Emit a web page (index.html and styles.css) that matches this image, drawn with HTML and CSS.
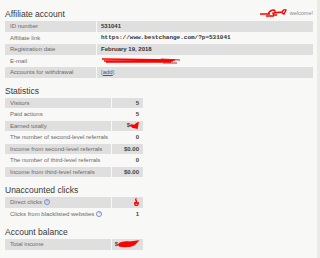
FILE: index.html
```html
<!DOCTYPE html>
<html lang="en">
<head>
    <meta charset="UTF-8">
    <meta name="viewport" content="width=device-width, initial-scale=1.0">
    <title>Affiliate account</title>
    <link rel="stylesheet" href="styles.css">
</head>
<body>
    <div class="page">
        <div class="title-row">
            <h2>Affiliate account</h2>
            <div class="welcome">
                <svg class="scribble" width="28" height="9" viewBox="0 0 28 9">
                    <path d="M0 6 L10 6 M8 6 C10 2 14 1 15 3 C16 5 12 7 13 5 L22 4 C23 2 25 1 26 2 L24 6 L22 5 M13 7 L17 7 M6 8 L14 8" fill="none" stroke="#f00" stroke-width="1.4"/>
                </svg>
                welcome!
            </div>
        </div>
        <table class="info wide">
            <tr class="odd"><td class="label">ID number</td><td class="value">531041</td></tr>
            <tr><td class="label">Affiliate link</td><td class="value mono">https://www.bestchange.com/?p=531041</td></tr>
            <tr class="odd"><td class="label">Registration date</td><td class="value">February 19, 2018</td></tr>
            <tr>
                <td class="label">E-mail</td>
                <td class="value">
                    <svg class="scribble" width="80" height="7" viewBox="0 0 80 7">
                        <path d="M1 2 L74 3 M3 4 L72 4 M5 5 L70 5" fill="none" stroke="#f00" stroke-width="1.6"/>
                        <path d="M60 2 L79 3 M62 6 L76 6" fill="none" stroke="#c02020" stroke-width="1"/>
                    </svg>
                </td>
            </tr>
            <tr class="odd"><td class="label">Accounts for withdrawal</td><td class="value plain">[<a href="#">add</a>]</td></tr>
        </table>

        <h2>Statistics</h2>
        <table class="info narrow">
            <tr class="odd"><td class="label">Visitors</td><td class="num">5</td></tr>
            <tr><td class="label">Paid actions</td><td class="num">5</td></tr>
            <tr class="odd">
                <td class="label">Earned totally</td>
                <td class="num">$<svg class="scribble" width="9" height="7" viewBox="0 0 9 7"><path d="M0 4 C2 1 4 6 6 2 L8 1 L7 6 L2 5" fill="#f00" stroke="#f00" stroke-width="1.5"/></svg></td>
            </tr>
            <tr><td class="label">The number of second-level referrals</td><td class="num">0</td></tr>
            <tr class="odd"><td class="label">Income from second-level referrals</td><td class="num">$0.00</td></tr>
            <tr><td class="label">The number of third-level referrals</td><td class="num">0</td></tr>
            <tr class="odd"><td class="label">Income from third-level referrals</td><td class="num">$0.00</td></tr>
        </table>

        <h2>Unaccounted clicks</h2>
        <table class="info narrow">
            <tr class="odd">
                <td class="label">Direct clicks <span class="hint">?</span></td>
                <td class="num"><svg class="scribble" width="5" height="8" viewBox="0 0 5 8"><path d="M2.5 0.5 C0 2 4 3 2 4 C0 5 0.5 7.5 2.5 7.5 C4.5 7.5 4.5 5 2.5 4 M0 5 L5 5" fill="none" stroke="#f00" stroke-width="1.3"/></svg></td>
            </tr>
            <tr><td class="label">Clicks from blacklisted websites <span class="hint">?</span></td><td class="num">1</td></tr>
        </table>

        <h2>Account balance</h2>
        <table class="info narrow">
            <tr class="odd">
                <td class="label">Total income</td>
                <td class="num">$<svg class="scribble" width="21" height="8" viewBox="0 0 21 8"><path d="M0 5 C3 1 8 2 12 2 L20 1 L17 4 C14 7 6 7 1 6" fill="#f00" stroke="#f00" stroke-width="1.2"/></svg></td>
            </tr>
        </table>
    </div>
</body>
</html>
```

FILE: styles.css
```css
html {
    background: linear-gradient(to right, #f8f8f6 317px, #ebebe6 317px);
    min-height: 100%;
}

body {
    margin: 0;
    padding: 0;
    font-family: "Liberation Sans", Arial, sans-serif;
    color: #333;
}

.page {
    padding: 0 7px 0 5px;
}

.title-row {
    display: flex;
    justify-content: space-between;
    align-items: flex-end;
    padding-top: 2px;
}

h2 {
    font-size: 8.5px;
    font-weight: normal;
    line-height: 10px;
    margin: 7px 0 2px;
    color: #383838;
}

.welcome {
    display: flex;
    align-items: center;
    gap: 2px;
    font-size: 5.5px;
    color: #888;
    margin-bottom: 4px;
}

.scribble {
    display: inline-block;
    vertical-align: middle;
}

/* tables */
.info {
    border-collapse: separate;
    border-spacing: 0;
    font-size: 6px;
}

.wide {
    width: 308px;
}

.narrow {
    width: 138px;
}

.info td {
    height: 10.5px;
    padding: 0;
    border-bottom: 1px solid #f8f8f6;
    white-space: nowrap;
}

.info tr.odd td {
    background-color: #dfdfdf;
}

.label {
    color: #6a6a6a;
    padding-left: 5px !important;
    border-right: 1px solid #f8f8f6;
}

.wide .label {
    width: 86px;
}

.value {
    font-weight: bold;
    padding-left: 4px !important;
    color: #333;
}

.mono {
    font-family: "Liberation Mono", "Courier New", monospace;
    color: #333;
}

.plain {
    font-weight: normal;
    color: #777;
}

.plain a {
    color: #3355aa;
}

.num {
    text-align: right;
    font-weight: bold;
    padding-right: 4px !important;
    width: 27px;
    color: #444;
}

.hint {
    display: inline-block;
    width: 4px;
    height: 4px;
    border: 0.7px solid #7a8fd0;
    border-radius: 50%;
    color: #7a8fd0;
    font-size: 4px;
    line-height: 4px;
    text-align: center;
    vertical-align: middle;
}
```
